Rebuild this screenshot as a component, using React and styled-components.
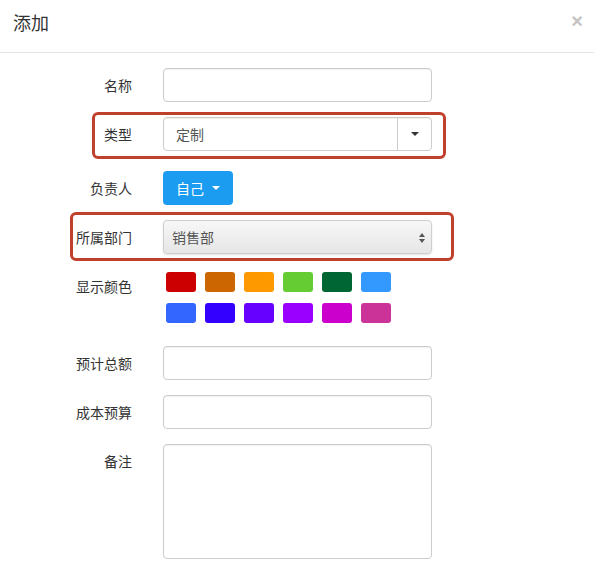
import React from 'react';
import styled, { createGlobalStyle } from 'styled-components';

const GlobalStyle = createGlobalStyle`
  body {
    margin: 0;
    background: #fff;
    font-family: "Noto Sans CJK SC", "Noto Sans", "Liberation Sans", sans-serif;
    color: #333;
  }
`;

const Modal = styled.div`
  width: 594px;
  height: 581px;
  overflow: hidden;
  background: #fff;
`;

const Header = styled.div`
  height: 52px;
  display: flex;
  align-items: center;
  justify-content: space-between;
  padding: 0 13px;
  border-bottom: 1px solid #e5e5e5;
`;

const Title = styled.h4`
  margin: 0 0 8px;
  font-size: 18px;
  font-weight: 400;
  color: #333;
`;

const Close = styled.button`
  border: none;
  background: none;
  padding: 0;
  margin: 0 -2px 10px 0;
  font-family: "Liberation Sans", Arial, sans-serif;
  font-size: 20px;
  font-weight: 700;
  line-height: 1;
  color: #c4c4c4;
  cursor: pointer;
`;

const Body = styled.form`
  padding-top: 15px;
`;

const Row = styled.div`
  position: relative;
  display: grid;
  width: 432px;
  grid-template-columns: 132px 269px;
  column-gap: 31px;
  margin-bottom: ${(p) => p.$gap || 15}px;
`;

const Highlight = styled.div`
  position: absolute;
  top: ${(p) => p.$top}px;
  bottom: ${(p) => p.$bottom}px;
  left: ${(p) => p.$left}px;
  right: ${(p) => p.$right}px;
  border: 3px solid #c0402e;
  border-radius: 6px;
  pointer-events: none;
`;

const Label = styled.label`
  text-align: right;
  font-size: 14px;
  line-height: 20px;
  padding-top: ${(p) => p.$pad ?? 7}px;
  color: #333;
`;

const Input = styled.input`
  box-sizing: border-box;
  width: 100%;
  height: 34px;
  padding: 6px 9px;
  border: 1px solid #ccc;
  border-radius: 4px;
  box-shadow: inset 0 1px 1px rgba(0, 0, 0, 0.06);
  font-family: inherit;
  font-size: 14px;
  color: #555;
  outline: none;
`;

const TextArea = styled.textarea`
  box-sizing: border-box;
  width: 100%;
  height: 115px;
  padding: 6px 9px;
  border: 1px solid #ccc;
  border-radius: 4px;
  box-shadow: inset 0 1px 1px rgba(0, 0, 0, 0.06);
  font-family: inherit;
  font-size: 14px;
  resize: none;
  outline: none;
`;

const InputGroup = styled.div`
  display: flex;
  height: 34px;
  box-sizing: border-box;
  border: 1px solid #ccc;
  border-radius: 4px;
  box-shadow: inset 0 1px 1px rgba(0, 0, 0, 0.06);
`;

const GroupText = styled.div`
  flex: 1;
  display: flex;
  align-items: center;
  padding: 0 12px;
  font-size: 14px;
  color: #555;
`;

const GroupButton = styled.div`
  width: 33px;
  display: flex;
  align-items: center;
  justify-content: center;
  border-left: 1px solid #ccc;
`;

const Caret = styled.span`
  display: inline-block;
  width: 0;
  height: 0;
  border-top: 4px solid ${(p) => p.$color || '#333'};
  border-left: 4px solid transparent;
  border-right: 4px solid transparent;
`;

const BlueButton = styled.button`
  justify-self: start;
  display: flex;
  align-items: center;
  gap: 8px;
  height: 34px;
  width: 70px;
  padding: 0 0 0 13px;
  border: none;
  border-radius: 4px;
  background: #1b9cf0;
  color: #fff;
  font-family: inherit;
  font-size: 14px;
`;

const NativeSelect = styled.div`
  display: flex;
  align-items: center;
  justify-content: space-between;
  height: 34px;
  box-sizing: border-box;
  padding: 0 6px 0 8px;
  border: 1px solid #cfcfcf;
  border-radius: 4px;
  background: linear-gradient(#f7f7f7, #e6e6e6);
  box-shadow: 0 1px 2px rgba(0, 0, 0, 0.12);
  font-size: 14px;
  color: #555;
`;

const Arrows = styled.span`
  display: flex;
  flex-direction: column;
  gap: 2px;
  margin-top: 1px;
`;

const ArrowUp = styled.span`
  width: 0;
  height: 0;
  border-bottom: 4px solid #555;
  border-left: 3px solid transparent;
  border-right: 3px solid transparent;
`;

const ArrowDown = styled(ArrowUp)`
  border-bottom: none;
  border-top: 4px solid #555;
`;

const Swatches = styled.div`
  display: grid;
  grid-template-columns: repeat(6, 30px);
  grid-auto-rows: 20px;
  column-gap: 9px;
  row-gap: 11px;
  padding-left: 3px;
`;

const Swatch = styled.span`
  border-radius: 3px;
  background: ${(p) => p.$color};
`;

const colors = [
  '#cc0000', '#cc6600', '#ff9900', '#66cc33', '#006633', '#3399ff',
  '#3366ff', '#3300ff', '#6600ff', '#9900ff', '#cc00cc', '#cc3399',
];

const App = () => (
  <Modal>
    <GlobalStyle />
    <Header>
      <Title>添加</Title>
      <Close type="button">×</Close>
    </Header>
    <Body>
      <Row>
        <Label>名称</Label>
        <Input type="text" />
      </Row>
      <Row $gap={20}>
        <Highlight $top={-5} $bottom={-8} $left={92} $right={-14} />
        <Label>类型</Label>
        <InputGroup>
          <GroupText>定制</GroupText>
          <GroupButton>
            <Caret />
          </GroupButton>
        </InputGroup>
      </Row>
      <Row>
        <Label>负责人</Label>
        <BlueButton type="button">
          自己 <Caret $color="#fff" />
        </BlueButton>
      </Row>
      <Row $gap={18}>
        <Highlight $top={-8} $bottom={-7} $left={70} $right={-22} />
        <Label>所属部门</Label>
        <NativeSelect>
          销售部
          <Arrows>
            <ArrowUp />
            <ArrowDown />
          </Arrows>
        </NativeSelect>
      </Row>
      <Row $gap={23}>
        <Label $pad={4}>显示颜色</Label>
        <Swatches>
          {colors.map((c) => (
            <Swatch key={c} $color={c} />
          ))}
        </Swatches>
      </Row>
      <Row>
        <Label>预计总额</Label>
        <Input type="text" />
      </Row>
      <Row>
        <Label>成本预算</Label>
        <Input type="text" />
      </Row>
      <Row>
        <Label>备注</Label>
        <TextArea />
      </Row>
    </Body>
  </Modal>
);

export default App;
